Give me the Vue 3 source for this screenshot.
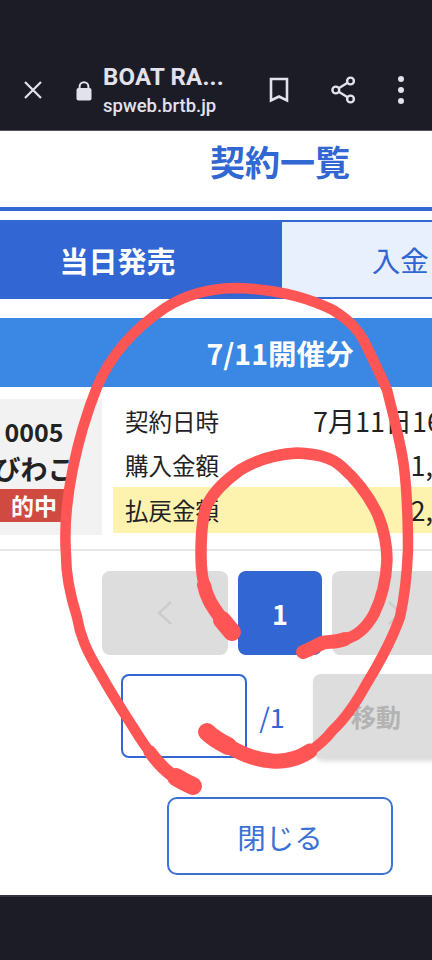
<template>
  <div class="screen">
    <header class="toolbar">
      <svg class="ic close" viewBox="0 0 20 20"><path d="M2 2 L18 18 M18 2 L2 18" /></svg>
      <svg class="lock" viewBox="0 0 16 20"><path d="M3.6 7.5V5.6a4.4 4.4 0 0 1 8.8 0v1.9" class="shackle" /><rect x="0.5" y="7" width="15" height="12.6" rx="2" /></svg>
      <div class="site">
        <div class="site-title">BOAT RA...</div>
        <div class="site-url">spweb.brtb.jp</div>
      </div>
      <svg class="ic bookmark" viewBox="0 0 20 26"><path d="M2 2 H18 V23.5 L10 19.5 L2 23.5 Z" /></svg>
      <svg class="ic share" viewBox="0 0 24 28"><circle cx="19.5" cy="5" r="3.4" /><circle cx="4.8" cy="14" r="3.4" /><circle cx="19.5" cy="23" r="3.4" /><path d="M7.7 12.2 L16.6 6.8 M7.7 15.8 L16.6 21.2" /></svg>
      <div class="dots"><i></i><i></i><i></i></div>
    </header>

    <main class="viewport">
      <div class="page">
        <h1 class="title">契約一覧</h1>
        <div class="tabs">
          <div class="tab active">当日発売</div>
          <div class="tab">入金・出金</div>
        </div>
        <div class="section-head">7/11開催分</div>
        <div class="contract">
          <div class="venue">
            <div class="venue-no">0005</div>
            <div class="venue-name">びわこ</div>
            <div class="badge">的中</div>
          </div>
          <div class="details">
            <div v-for="row in rows" :key="row.label" class="line" :class="{ paid: row.paid, amount: row.amount }">
              <span class="label">{{ row.label }}</span><span class="value">{{ row.value }}</span>
            </div>
          </div>
        </div>
        <div class="pager">
          <button class="page-btn" aria-label="前へ">
            <svg class="chev" viewBox="0 0 16 26"><path d="M14 2 L2 13 L14 24" /></svg>
          </button>
          <button class="page-btn current">1</button>
          <button class="page-btn" aria-label="次へ">
            <svg class="chev" viewBox="0 0 16 26"><path d="M2 2 L14 13 L2 24" /></svg>
          </button>
        </div>
        <div class="jump">
          <div class="jump-input"></div>
          <span class="jump-total">/1</span>
          <button class="jump-btn">移動</button>
        </div>
        <button class="close-btn">閉じる</button>
      </div>
    </main>

    <footer class="bottom"></footer>

    <svg class="scribble" viewBox="0 0 432 960">
      <path class="w10" d="M172 775 C160 765 150 755 133 727 C120 707 110 691 100 673 C86 650 80 635 77 617 C70 595 66 575 66 555 C62 500 78 435 97 387 C112 352 135 328 165 308 C188 293 212 288 238 288 C270 289 305 296 333 310 C352 322 360 332 367 347 C376 366 382 378 387 390 C396 425 402 450 404 467 C408 500 408 525 408 550 C407 575 405 595 400 617 C392 640 378 665 367 683 C356 703 346 718 333 730 C325 740 318 746 310 751" />
      <path class="w13" d="M150 752 C158 763 165 770 172 775" />
      <path class="w18" d="M176 777 C182 781 187 783 193 786" />
      <path class="w15" d="M310 751 C298 759 285 762 272 761 C255 760 240 753 228 746" />
      <path class="w18" d="M228 746 C220 742 213 738 207 732" />
      <path class="w11" d="M206 590 C202 580 201 570 201 555 C201 530 203 512 208 503 C215 490 225 481 240 470 C258 459 280 454 297 453 C315 454 330 456 342 467 C358 481 370 498 378 515 C384 530 387 545 387 560 C386 585 381 600 374 614 C368 625 358 636 345 639" />
      <path class="w14" d="M204 585 C207 600 214 608 222 620" />
      <path class="w18" d="M222 620 L232 632" />
      <path class="w14" d="M345 639 C335 643 328 641 322 643 C315 646 310 650 303 652" />
    </svg>
  </div>
</template>

<script setup>
const rows = [
  { label: '契約日時', value: '7月11日16:25:30' },
  { label: '購入金額', value: '1,000円', amount: true },
  { label: '払戻金額', value: '2,500円', amount: true, paid: true },
]
</script>

<style>
html, body { margin: 0; background: #fff; }
</style>

<style scoped>
.screen {
  position: relative;
  width: 432px;
  height: 960px;
  display: flex;
  flex-direction: column;
  overflow: hidden;
  background: #fff;
  font-family: "Noto Sans CJK JP", "Noto Sans", sans-serif;
}
.toolbar {
  flex: none;
  height: 131px;
  box-sizing: border-box;
  padding: 50px 0 0 23px;
  display: flex;
  align-items: center;
  background: #1c1c26;
  border-bottom: 1px solid #55555f;
  color: #e3e1ec;
}
.ic { fill: none; stroke: #e3e1ec; stroke-width: 2.4; flex: none; }
.close { width: 20px; height: 20px; stroke-width: 2.2; }
.lock { width: 16px; height: 20px; margin-left: 33px; margin-top: 2px; fill: #e3e1ec; flex: none; }
.shackle { fill: none; stroke: #e3e1ec; stroke-width: 2; }
.site { width: 165px; margin-left: 11px; font-family: Roboto, sans-serif; padding-top: 2px; }
.site-title { font-size: 24px; line-height: 29px; font-weight: 700; letter-spacing: 0.2px; white-space: nowrap; }
.site-url { font-size: 18.5px; line-height: 28px; font-weight: 500; }
.bookmark { width: 20px; height: 26px; stroke-width: 2.6; margin-left: 1px; }
.share { width: 24px; height: 28px; margin-left: 42px; stroke-width: 2.4; }
.dots { display: flex; flex-direction: column; gap: 5px; margin-left: 43px; }
.dots i { display: block; width: 6px; height: 6px; border-radius: 50%; background: #e3e1ec; }

.viewport { flex: 1; min-height: 0; overflow: hidden; }
.page { width: 652px; margin-left: -46px; display: flex; flex-direction: column; }
.title {
  margin: 0;
  height: 76px;
  line-height: 60px;
  text-align: center;
  font-size: 35px;
  font-weight: 700;
  color: #3166d3;
  border-bottom: 4px solid #3166d3;
  box-sizing: content-box;
}
.tabs { display: flex; margin-top: 9px; height: 79px; }
.tab {
  flex: 1 1 0;
  box-sizing: border-box;
  display: flex;
  align-items: center;
  justify-content: center;
  font-size: 28.5px;
  color: #3166d3;
  background: #e9f0fd;
  border: 2px solid #3166d3;
  border-left-width: 1px;
}
.tab.active {
  flex: none;
  width: 327px;
  background: #3166d3;
  color: #fff;
  font-weight: 700;
  font-size: 29px;
  border: none;
}
.section-head {
  margin-top: 19px;
  height: 69px;
  line-height: 70px;
  text-align: center;
  background: #3b87e4;
  color: #fff;
  font-size: 28.5px;
  font-weight: 700;
}
.contract {
  display: flex;
  align-items: flex-start;
  margin-top: 12px;
  padding: 0 12px 14px;
  gap: 11px;
  border-bottom: 2px solid #e6e6e6;
}
.venue {
  flex: none;
  width: 136px;
  height: 136px;
  box-sizing: border-box;
  padding-top: 14px;
  background: #f2f2f2;
  text-align: center;
  color: #222;
  font-weight: 700;
}
.venue-no { font-size: 25px; line-height: 36px; }
.venue-name { font-size: 27px; line-height: 40px; }
.badge {
  width: 72px;
  margin: 0 auto;
  height: 33px;
  line-height: 33px;
  background: #d14a42;
  color: #fff;
  font-size: 23px;
}
.details { flex: none; width: 416px; color: #222; }
.line {
  display: flex;
  justify-content: space-between;
  align-items: center;
  height: 44px;
  padding: 0 12px;
}
.line.amount { padding-right: 24px; }
.label { font-size: 23.5px; }
.value { font-size: 27px; line-height: 32px; }
.line.paid { height: 46px; background: #fdf2ae; }
.pager { display: flex; justify-content: center; gap: 10px; margin-top: 20px; }
.page-btn {
  width: 126px;
  height: 84px;
  padding: 0;
  border: none;
  border-radius: 8px;
  background: #dddddd;
  display: flex;
  align-items: center;
  justify-content: center;
  font-family: inherit;
}
.page-btn.current { width: 84px; background: #3166d3; color: #fff; font-size: 27px; font-weight: 700; }
.chev { width: 16px; height: 26px; fill: none; stroke: #cccccc; stroke-width: 2.4; }
.jump { display: flex; justify-content: center; align-items: center; margin-top: 19px; }
.jump-input {
  width: 126px;
  height: 84px;
  box-sizing: border-box;
  border: 2px solid #3166d3;
  border-radius: 8px;
  background: #fff;
}
.jump-total { width: 50px; padding-right: 16px; text-align: center; font-size: 27px; color: #3166d3; }
.jump-btn {
  width: 126px;
  height: 84px;
  padding: 0;
  border: none;
  border-radius: 8px;
  background: #dddddd;
  color: #b3b3b3;
  font-family: inherit;
  font-size: 25px;
  font-weight: 700;
  box-shadow: 2px 3px 5px rgba(0, 0, 0, 0.15);
}
.close-btn {
  align-self: center;
  width: 226px;
  height: 78px;
  margin-top: 39px;
  padding: 0;
  box-sizing: border-box;
  border: 2px solid #3a71d6;
  border-radius: 10px;
  background: #fff;
  color: #3a71d6;
  font-family: inherit;
  font-size: 28.5px;
}
.bottom {
  flex: none;
  height: 65px;
  box-sizing: border-box;
  background: #1c1c26;
  border-top: 2px solid #33333d;
}
.scribble {
  position: absolute;
  left: 0;
  top: 0;
  width: 432px;
  height: 960px;
  pointer-events: none;
  fill: none;
  stroke: #ff5555;
  stroke-linecap: round;
  stroke-linejoin: round;
}
.w10 { stroke-width: 10.5; }
.w11 { stroke-width: 11.5; }
.w13 { stroke-width: 13; }
.w14 { stroke-width: 14; }
.w15 { stroke-width: 15; }
.w18 { stroke-width: 18; }
</style>
